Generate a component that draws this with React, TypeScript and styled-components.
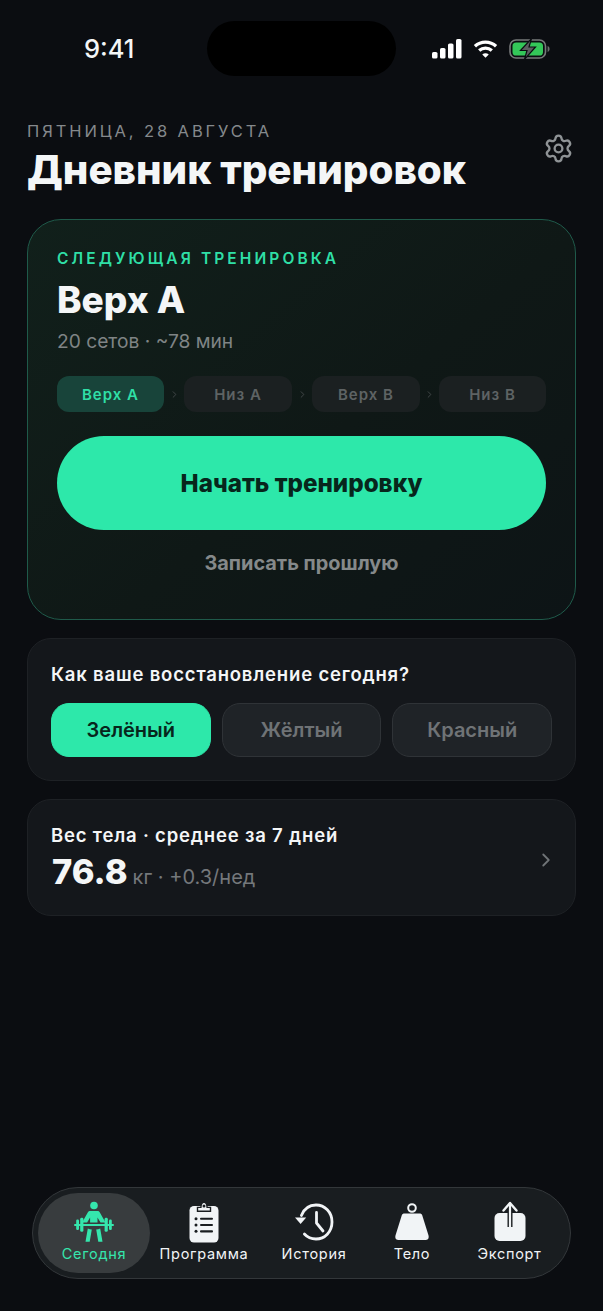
import { ChevronRight, Settings } from 'lucide-react';
import { Fragment } from 'react';
import styled, { createGlobalStyle } from 'styled-components';

const GlobalStyle = createGlobalStyle`
  html, body {
    margin: 0;
    padding: 0;
    background: #0b0d11;
  }
  * {
    box-sizing: border-box;
  }
`;

const Screen = styled.div`
  width: 603px;
  height: 1311px;
  overflow: hidden;
  background: #0b0d11;
  font-family: Inter, 'Liberation Sans', sans-serif;
  color: #f4f6f7;
  display: flex;
  flex-direction: column;
`;

const StatusBar = styled.div`
  height: 97px;
  padding: 21px 53px 0 84px;
  display: flex;
  align-items: flex-start;
`;

const Clock = styled.div`
  font-size: 25.5px;
  font-weight: 500;
  line-height: 55px;
  width: 123px;
`;

const Island = styled.div`
  width: 189px;
  height: 55px;
  border-radius: 28px;
  background: #000;
`;

const StatusIcons = styled.div`
  margin-left: auto;
  display: flex;
  align-items: center;
  gap: 11px;
  height: 55px;
`;

const Header = styled.header`
  padding: 24px 27px 0;
  display: flex;
  justify-content: space-between;
  align-items: flex-start;
  height: 122px;
`;

const DateLine = styled.div`
  font-size: 16.5px;
  line-height: 20px;
  letter-spacing: 2.9px;
  color: #85898c;
`;

const Title = styled.h1`
  margin: 0;
  margin-top: 5px;
  font-size: 40.3px;
  line-height: 48px;
  font-weight: 800;
`;

const GearButton = styled.div`
  color: #8f9396;
  margin: 12px 2px 0 0;
  display: flex;
`;

const Content = styled.main`
  padding: 0 27px;
  display: flex;
  flex-direction: column;
  gap: 18px;
`;

const HeroCard = styled.section`
  height: 401px;
  border-radius: 34px;
  border: 1px solid #1f5a4a;
  background: linear-gradient(140deg, #11201b 0%, #0f1816 55%, #0d1416 100%);
  padding: 29px 29px 0;
  display: flex;
  flex-direction: column;
`;

const Eyebrow = styled.div`
  font-size: 15.5px;
  line-height: 20px;
  font-weight: 600;
  letter-spacing: 3.1px;
  color: #2fdfa6;
`;

const WorkoutName = styled.div`
  margin-top: 9px;
  font-size: 37px;
  line-height: 44px;
  font-weight: 800;
`;

const WorkoutMeta = styled.div`
  margin-top: 7px;
  font-size: 19.2px;
  line-height: 24px;
  color: #7f8485;
`;

const Steps = styled.div`
  margin-top: 23px;
  display: grid;
  grid-template-columns: 107px 20px 108px 20px 108px 19px 107px;
  align-items: center;
`;

const StepChip = styled.div<{ $active?: boolean }>`
  height: 36px;
  border-radius: 12px;
  display: flex;
  align-items: center;
  justify-content: center;
  font-size: 15px;
  font-weight: 600;
  letter-spacing: 1px;
  background: ${(p) => (p.$active ? '#18443a' : '#1b2021')};
  color: ${(p) => (p.$active ? '#2fdfa6' : '#5e6364')};
`;

const StepArrow = styled.div`
  display: flex;
  justify-content: center;
  color: #44494a;
`;

const StartButton = styled.button`
  margin-top: 24px;
  height: 94px;
  border: none;
  border-radius: 47px;
  background: #2de8aa;
  color: #07261c;
  font-family: inherit;
  font-size: 24.2px;
  font-weight: 800;
`;

const LogPast = styled.div`
  margin-top: 21px;
  text-align: center;
  font-size: 19.9px;
  line-height: 24px;
  font-weight: 700;
  color: #85898a;
`;

const Card = styled.section`
  border-radius: 24px;
  border: 1px solid #1e2125;
  background: #14171b;
`;

const RecoveryCard = styled(Card)`
  height: 143px;
  padding: 23px 23px 0;
`;

const CardTitle = styled.div`
  font-size: 18.5px;
  line-height: 24px;
  font-weight: 600;
  letter-spacing: 0.82px;
`;

const RecoveryRow = styled.div`
  margin-top: 17px;
  display: grid;
  grid-template-columns: repeat(3, 1fr);
  gap: 11px;
`;

const RecoveryOption = styled.div<{ $active?: boolean }>`
  height: 54px;
  border-radius: 18px;
  display: flex;
  align-items: center;
  justify-content: center;
  font-size: 20px;
  font-weight: 600;
  background: ${(p) => (p.$active ? '#2de8aa' : '#1f2327')};
  border: 1px solid ${(p) => (p.$active ? '#2de8aa' : '#2f3337')};
  color: ${(p) => (p.$active ? '#07261c' : '#6f7376')};
`;

const WeightCard = styled(Card)`
  height: 117px;
  padding: 1px 23px 0;
  display: flex;
  align-items: center;
  justify-content: space-between;
`;

const WeightValueRow = styled.div`
  margin-top: 4px;
  display: flex;
  align-items: baseline;
  gap: 5px;
`;

const WeightValue = styled.span`
  font-size: 34.5px;
  line-height: 42px;
  font-weight: 800;
  margin-left: 1px;
`;

const WeightTrend = styled.span`
  font-size: 20px;
  color: #74787b;
`;

const WeightChevron = styled.div`
  margin: 3px -5px 0 0;
  color: #6f7376;
  display: flex;
`;

const TabBar = styled.nav`
  margin: auto 32px 32px;
  height: 92px;
  border-radius: 46px;
  border: 1px solid #33373a;
  background: #191d20;
  padding: 5px;
  display: grid;
  grid-template-columns: 112px 108px 112px 84px 1fr;
`;

const Tab = styled.div<{ $active?: boolean }>`
  border-radius: 40px;
  display: flex;
  flex-direction: column;
  align-items: center;
  background: ${(p) => (p.$active ? '#383c3e' : 'transparent')};
  color: ${(p) => (p.$active ? '#35e6ad' : '#f1f4f6')};
`;

const TabIcon = styled.div`
  height: 46px;
  margin-top: 6px;
  display: flex;
  align-items: center;
  justify-content: center;
`;

const TabLabel = styled.div`
  font-size: 14.5px;
  line-height: 18px;
  font-weight: 400;
  letter-spacing: 0.7px;
`;

const SignalIcon = () => (
  <svg width="30" height="20" viewBox="0 0 30 20" fill="#fff">
    <rect x="0" y="13" width="5.5" height="6.5" rx="1.6" />
    <rect x="8" y="9" width="5.5" height="10.5" rx="1.6" />
    <rect x="16" y="4.5" width="5.5" height="15" rx="1.6" />
    <rect x="24" y="0" width="5.5" height="19.5" rx="1.6" />
  </svg>
);

const WifiIcon = () => (
  <svg width="25" height="20" viewBox="0 0 26 20" fill="none" stroke="#fff" strokeWidth="3.4">
    <path d="M2 7.2C8.2 1.4 17.8 1.4 24 7.2" />
    <path d="M6.4 11.6C10.2 8.2 15.8 8.2 19.6 11.6" />
    <path d="M13 19.2 9.6 15.6C11.6 14 14.4 14 16.4 15.6Z" fill="#fff" stroke="none" />
  </svg>
);

const BatteryIcon = () => (
  <svg width="41" height="22" viewBox="0 0 41 22">
    <rect x="1" y="2" width="35.5" height="18" rx="6" fill="none" stroke="#77797a" strokeWidth="1.6" />
    <rect x="3.5" y="4.5" width="30.5" height="13" rx="3.6" fill="#34c759" />
    <path d="M38.6 8v6c1.3-.4 2-1.6 2-3s-.7-2.6-2-3Z" fill="#6d6f70" />
    <path d="M22.5 0.6 11.5 12.5h6.5L15.5 21.4 26.5 9h-6.5Z" fill="#5b5e60" stroke="#0b0d11" strokeWidth="1.2" />
  </svg>
);

const LifterIcon = () => (
  <svg width="42" height="42" viewBox="0 0 42 42" fill="#35e6ad">
    <circle cx="21" cy="4.5" r="3.8" />
    <path d="M17.5 10h7c1 0 1.7.4 2.2 1.3l5.8 10.2h-5l-3-5v5h-7.4v-5l-3 5h-5l5.8-10.2c.5-.9 1.2-1.3 2.2-1.3Z" />
    <rect x="1" y="23" width="40" height="2" rx="1" />
    <rect x="3.2" y="18.5" width="2.8" height="10.5" rx="1.2" />
    <rect x="7.2" y="16.8" width="3.2" height="14" rx="1.4" />
    <rect x="31.6" y="16.8" width="3.2" height="14" rx="1.4" />
    <rect x="36" y="18.5" width="2.8" height="10.5" rx="1.2" />
    <path d="M14.8 27.4c1.4.6 2.6.9 4 1l-2.1 12.4h-4.2Z" />
    <path d="M27.2 27.4c-1.4.6-2.6.9-4 1l2.1 12.4h4.2Z" />
  </svg>
);

const ClipboardIcon = () => (
  <svg width="30" height="42" viewBox="0 0 30 42">
    <rect x="0.5" y="5" width="29" height="36.5" rx="4.5" fill="#f1f4f6" />
    <path d="M8.5 10.2V6.4h3.4C12 3 13.2 1.2 15 1.2S18 3 18.1 6.4h3.4v3.8Z" fill="#f1f4f6" stroke="#191d20" strokeWidth="1.4" />
    <circle cx="15" cy="5" r="1.5" fill="#191d20" />
    <g fill="#191d20">
      <circle cx="7" cy="17.7" r="1.5" />
      <rect x="11" y="16.7" width="13" height="2.1" rx="1" />
      <circle cx="7" cy="24" r="1.5" />
      <rect x="11" y="23" width="13" height="2.1" rx="1" />
      <circle cx="7" cy="30.3" r="1.5" />
      <rect x="11" y="29.3" width="13" height="2.1" rx="1" />
    </g>
  </svg>
);

const HistoryIcon = () => (
  <svg width="40" height="38" viewBox="0 0 40 38" fill="none" stroke="#f1f4f6" strokeWidth="2.8" strokeLinecap="round" strokeLinejoin="round">
    <path d="M7.4 12.5C10 6 15.4 2 22 2c8.8 0 16 7.2 16 17s-7.2 17-16 17c-4.6 0-8.8-1.9-11.6-5" />
    <path d="M22.5 9.5V20l6.5 8" />
    <path d="M1 14.5 6.6 21l5.6-6.5Z" fill="#f1f4f6" stroke="none" />
  </svg>
);

const WeightIcon = () => (
  <svg width="34" height="38" viewBox="0 0 34 38">
    <circle cx="17" cy="5" r="3.8" fill="none" stroke="#f1f4f6" strokeWidth="2" />
    <path d="M9.5 10.5h15c1.4 0 2.3.6 2.8 2l6.2 20c.7 2.6-.4 4.5-3 4.5H3.5c-2.6 0-3.7-1.9-3-4.5l6.2-20c.5-1.4 1.4-2 2.8-2Z" fill="#f1f4f6" />
  </svg>
);

const ExportIcon = () => (
  <svg width="32" height="42" viewBox="0 0 32 42">
    <rect x="0.5" y="12" width="31" height="28" rx="5" fill="#f1f4f6" />
    <path d="M16 26V3" stroke="#191d20" strokeWidth="5" />
    <path d="M16 26V2.5" stroke="#f1f4f6" strokeWidth="2.2" strokeLinecap="round" />
    <path d="M9.5 9.5 16 2l6.5 7.5" fill="none" stroke="#f1f4f6" strokeWidth="2.4" strokeLinecap="round" strokeLinejoin="round" />
  </svg>
);

const steps = ['Верх А', 'Низ А', 'Верх В', 'Низ В'];
const recovery = ['Зелёный', 'Жёлтый', 'Красный'];
const tabs = [
  { label: 'Сегодня', icon: <LifterIcon />, active: true },
  { label: 'Программа', icon: <ClipboardIcon /> },
  { label: 'История', icon: <HistoryIcon /> },
  { label: 'Тело', icon: <WeightIcon /> },
  { label: 'Экспорт', icon: <ExportIcon /> },
];

const App = () => {
  return (
    <Screen>
      <GlobalStyle />
      <StatusBar>
        <Clock>9:41</Clock>
        <Island />
        <StatusIcons>
          <SignalIcon />
          <WifiIcon />
          <BatteryIcon />
        </StatusIcons>
      </StatusBar>

      <Header>
        <div>
          <DateLine>ПЯТНИЦА, 28 АВГУСТА</DateLine>
          <Title>Дневник тренировок</Title>
        </div>
        <GearButton>
          <Settings size={31} strokeWidth={1.8} />
        </GearButton>
      </Header>

      <Content>
        <HeroCard>
          <Eyebrow>СЛЕДУЮЩАЯ ТРЕНИРОВКА</Eyebrow>
          <WorkoutName>Верх А</WorkoutName>
          <WorkoutMeta>20 сетов · ~78 мин</WorkoutMeta>
          <Steps>
            {steps.map((step, i) => (
              <Fragment key={step}>
                <StepChip $active={i === 0}>{step}</StepChip>
                {i < steps.length - 1 && (
                  <StepArrow>
                    <ChevronRight size={11} strokeWidth={2} />
                  </StepArrow>
                )}
              </Fragment>
            ))}
          </Steps>
          <StartButton>Начать тренировку</StartButton>
          <LogPast>Записать прошлую</LogPast>
        </HeroCard>

        <RecoveryCard>
          <CardTitle>Как ваше восстановление сегодня?</CardTitle>
          <RecoveryRow>
            {recovery.map((option, i) => (
              <RecoveryOption key={option} $active={i === 0}>
                {option}
              </RecoveryOption>
            ))}
          </RecoveryRow>
        </RecoveryCard>

        <WeightCard>
          <div>
            <CardTitle>Вес тела · среднее за 7 дней</CardTitle>
            <WeightValueRow>
              <WeightValue>76.8</WeightValue>
              <WeightTrend>кг · +0.3/нед</WeightTrend>
            </WeightValueRow>
          </div>
          <WeightChevron>
            <ChevronRight size={22} strokeWidth={2} />
          </WeightChevron>
        </WeightCard>
      </Content>

      <TabBar>
        {tabs.map((tab) => (
          <Tab key={tab.label} $active={tab.active}>
            <TabIcon>{tab.icon}</TabIcon>
            <TabLabel>{tab.label}</TabLabel>
          </Tab>
        ))}
      </TabBar>
    </Screen>
  );
};

export default App;
